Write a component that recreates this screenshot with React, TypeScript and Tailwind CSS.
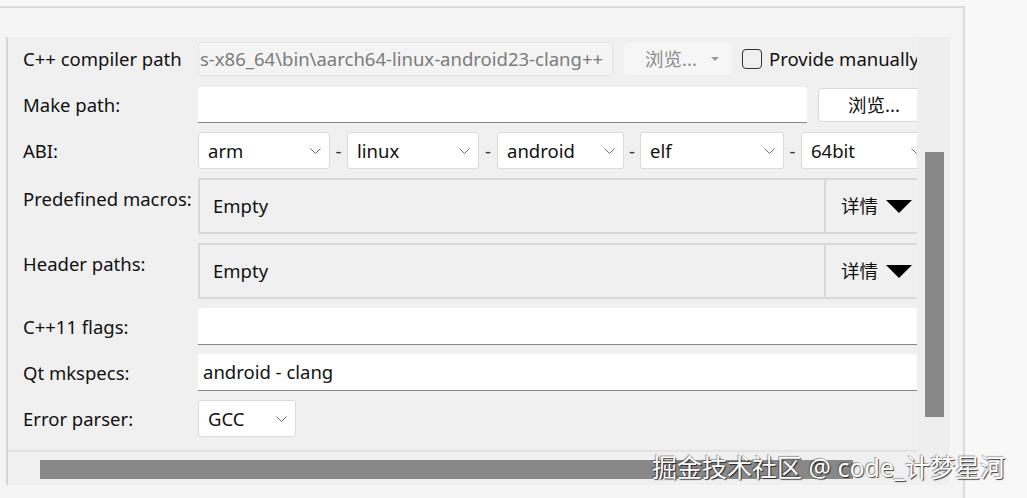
import React from "react";

const FONT = "font-['Noto_Sans','Noto_Sans_CJK_SC',sans-serif]";

function Chevron() {
  return (
    <svg width="11" height="6" viewBox="0 0 11 6" className="shrink-0">
      <polyline points="0.5,0.5 5.5,5.5 10.5,0.5" fill="none" stroke="#6b6b6b" strokeWidth="1" />
    </svg>
  );
}

function Combo({ text, w }: { text: string; w: string }) {
  return (
    <div className={`${w} h-[37px] shrink-0 flex items-center justify-between pl-[9px] pr-[8px] bg-white border border-[#dadada] rounded-[3px]`}>
      <span>{text}</span>
      <Chevron />
    </div>
  );
}

function Sep({ w }: { w: string }) {
  return <div className={`${w} shrink-0 text-center text-[#333]`}>-</div>;
}

function Label({ children, top }: { children: React.ReactNode; top?: boolean }) {
  return (
    <div className={`flex ${top ? "items-start pt-[7px]" : "items-center"} whitespace-nowrap`}>{children}</div>
  );
}

function Details() {
  return (
    <div className="h-[56px] flex border-2 border-[#d9d9d9] bg-[#f0f0f0]">
      <div className="flex-1 flex items-center pl-[13px]">Empty</div>
      <div className="w-[105px] border-l-2 border-[#d9d9d9] flex items-center pl-[15px] gap-[8px]">
        <span>详情</span>
        <svg width="26" height="13" viewBox="0 0 26 13" className="shrink-0">
          <polygon points="0,0 26,0 13,13" fill="#000" />
        </svg>
      </div>
    </div>
  );
}

function TextInput({ w, value }: { w: string; value?: string }) {
  return (
    <div className={`${w} h-[37px] flex items-center pl-[5px] bg-white border-b border-[#878787] rounded-t-[3px]`}>
      {value}
    </div>
  );
}

export default function App() {
  return (
    <div className={`relative w-[1027px] h-[498px] overflow-hidden bg-[#f8f8f8] pt-[6px] text-[18.5px] text-[#111] ${FONT}`}>
      <div className="w-[965px] h-[492px] border-t-2 border-r-2 border-[#dcdcdc] bg-[#f5f5f5] pt-[29px] pl-[6px]">
        <div className="w-[944px] h-[448px] border-l-2 border-[#d6d6d6] bg-[#f0f0f0] flex flex-col">
          <div className="flex">
            {/* scroll viewport */}
            <div className="w-[909px] h-[415px] overflow-hidden border-b-2 border-[#e2e2e2]">
              <div className="w-[923px] pl-[15px] pt-[2px] grid grid-cols-[175px_1fr] gap-y-[9px]">
                <Label>C++ compiler path</Label>
                <div className="h-[39px] flex items-center">
                  <div className="w-[415px] h-[34px] shrink-0 flex items-center pl-[1px] bg-[#f4f4f4] border border-[#e6e6e6] rounded-[3px] text-[#7b7b7b] overflow-hidden whitespace-nowrap">
                    s-x86_64\bin\aarch64-linux-android23-clang++
                  </div>
                  <div className="ml-[11px] w-[108px] h-[32px] shrink-0 flex items-center pl-[21px] pr-[13px] justify-between bg-[#f6f6f6] rounded-[4px] text-[#8c8c8c]">
                    <span>浏览...</span>
                    <svg width="8" height="4" viewBox="0 0 8 4">
                      <polygon points="0,0 8,0 4,4" fill="#9a9a9a" />
                    </svg>
                  </div>
                  <div className="ml-[10px] w-[20px] h-[20px] shrink-0 border border-[#333] rounded-[4px]" />
                  <span className="ml-[7px] whitespace-nowrap">Provide manually</span>
                </div>

                <Label>Make path:</Label>
                <div className="flex items-center">
                  <div className="w-[609px] h-[36px] shrink-0 bg-white border-b border-[#878787] rounded-t-[3px]" />
                  <div className="ml-[11px] w-[110px] h-[34px] shrink-0 flex items-center pl-[29px] bg-white border border-[#d8d8d8] rounded-[4px]">
                    浏览...
                  </div>
                </div>

                <Label>ABI:</Label>
                <div className="flex items-center">
                  <Combo text="arm" w="w-[132px]" />
                  <Sep w="w-[17px]" />
                  <Combo text="linux" w="w-[132px]" />
                  <Sep w="w-[18px]" />
                  <Combo text="android" w="w-[127px]" />
                  <Sep w="w-[16px]" />
                  <Combo text="elf" w="w-[144px]" />
                  <Sep w="w-[17px]" />
                  <Combo text="64bit" w="w-[130px]" />
                </div>

                <Label top>Predefined macros:</Label>
                <Details />

                <Label top>Header paths:</Label>
                <Details />

                <Label>C++11 flags:</Label>
                <TextInput w="w-full" />

                <Label>Qt mkspecs:</Label>
                <TextInput w="w-full" value="android - clang" />

                <Label>Error parser:</Label>
                <div>
                  <Combo text="GCC" w="w-[98px]" />
                </div>
              </div>
            </div>
            {/* vertical scrollbar */}
            <div className="w-[33px] h-[415px] bg-[#eeeeee] pt-[115px] pl-[8px]">
              <div className="w-[19px] h-[265px] bg-[#888888]" />
            </div>
          </div>
          {/* horizontal scrollbar */}
          <div className="w-[909px] h-[33px] pt-[8px] pl-[32px]">
            <div className="w-[813px] h-[19px] bg-[#888888]" />
          </div>
        </div>
      </div>

      {/* watermark */}
      <div className="absolute left-[652px] top-[449px] text-[25px] text-white whitespace-nowrap [text-shadow:1px_1px_1px_rgba(0,0,0,0.75),-1px_-1px_1px_rgba(0,0,0,0.35)]">
        掘金技术社区 @ code_计梦星河
      </div>
    </div>
  );
}
